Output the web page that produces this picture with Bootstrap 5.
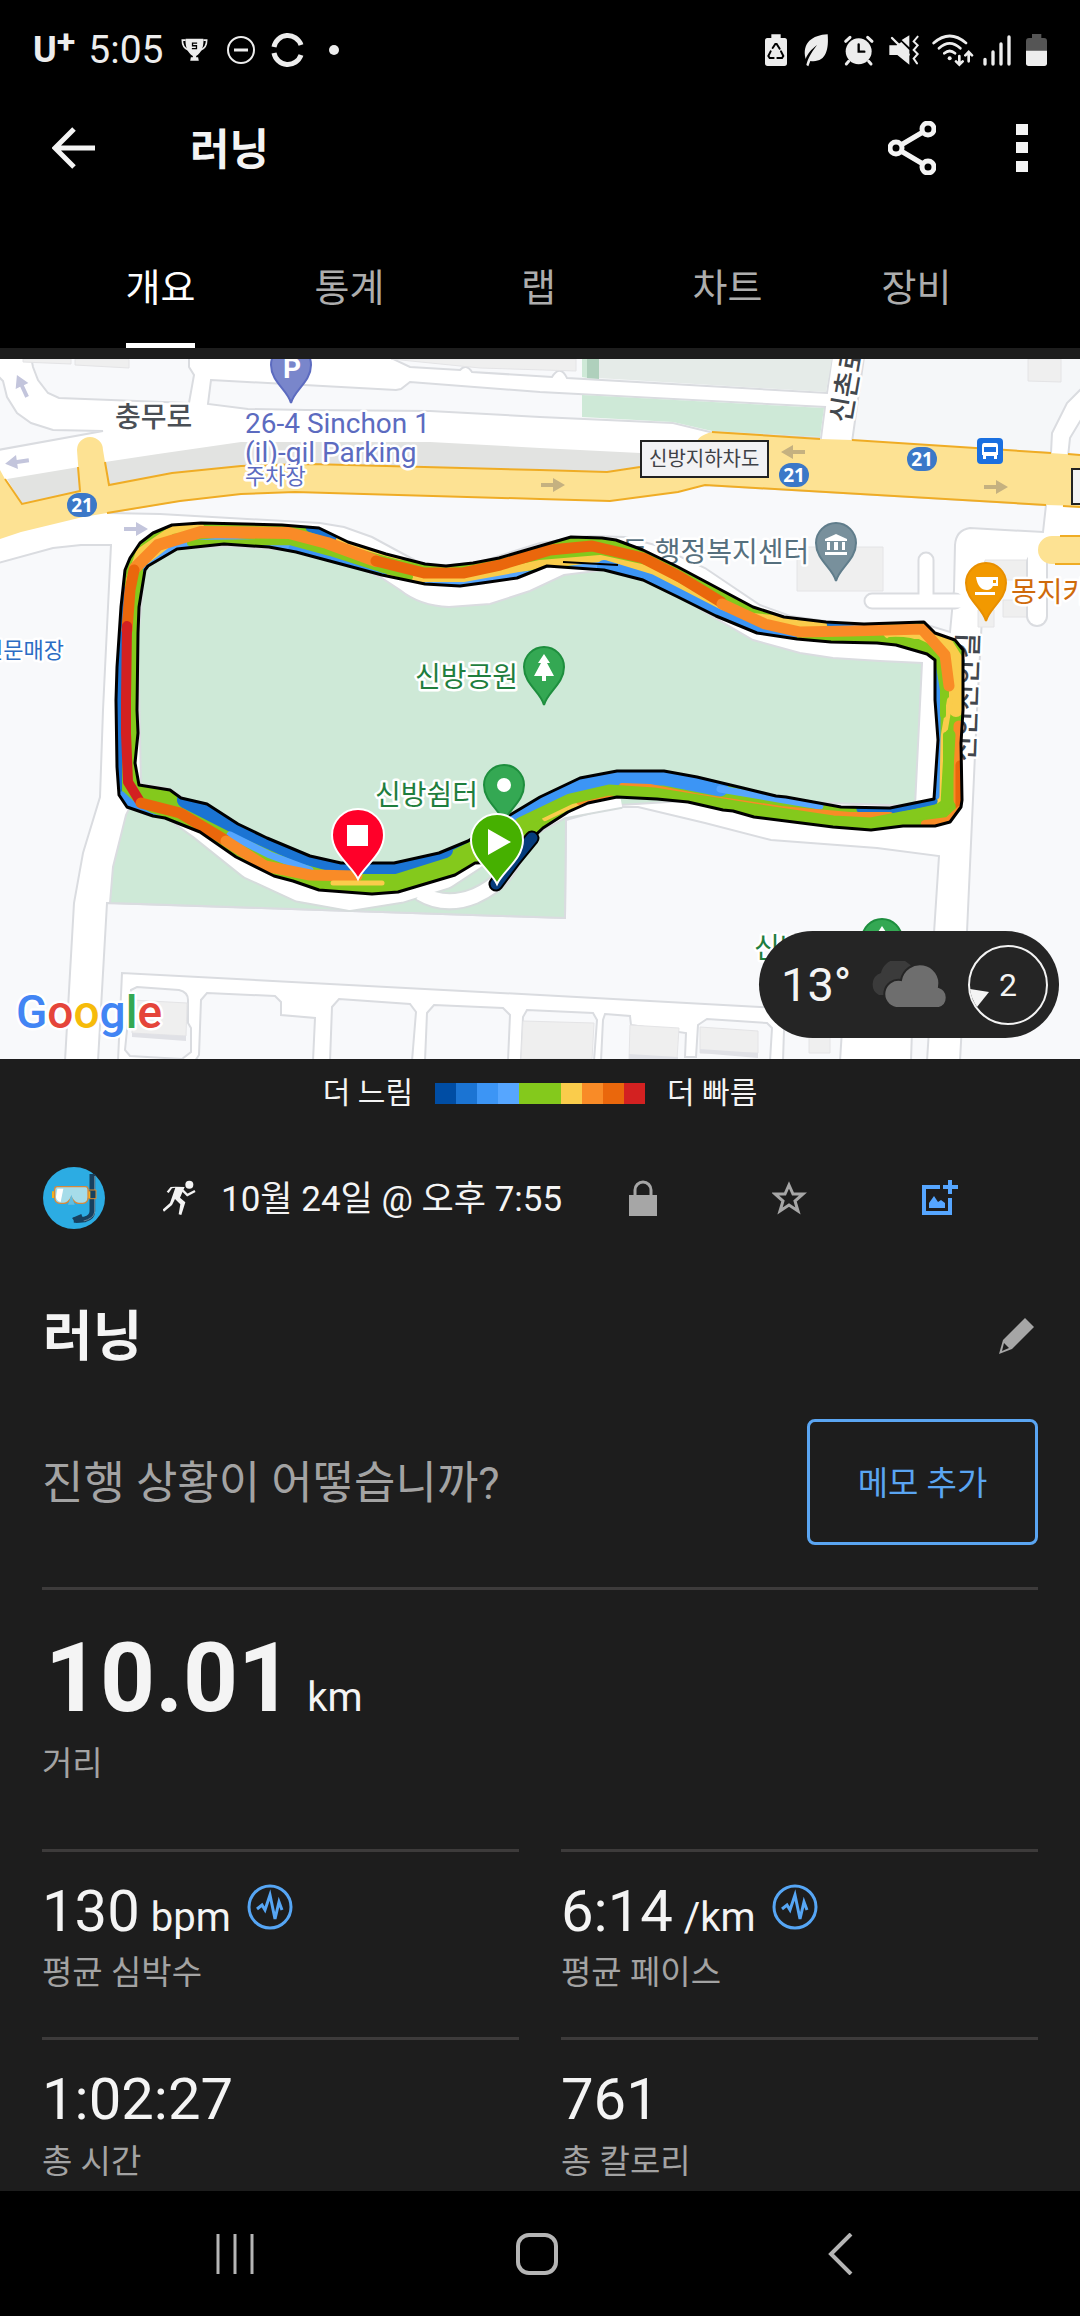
<!DOCTYPE html>
<html lang="ko">
<head>
<meta charset="utf-8">
<meta name="viewport" content="width=device-width, initial-scale=1">
<title>러닝</title>
<link rel="stylesheet" href="https://cdn.jsdelivr.net/npm/bootstrap@5.3.0/dist/css/bootstrap.min.css">
<style>
  body { background:#1d1d1d; color:#f4f4f4; font-family:Roboto,"Noto Sans CJK KR",sans-serif; font-size:33px; line-height:44px; min-height:100vh; }
  svg { display:block; flex:none; }
  .plain-btn { background:none; border:0; padding:0; color:inherit; }
  .status-bar { height:100px; padding:0 33px; color:#ededed; }
  .status-bar .clock { font-size:39px; margin-left:13px; }
  .carrier { font-size:36px; font-weight:700; }
  .carrier sup { font-size:34px; top:-9px; line-height:1; }
  .app-bar { height:96px; padding:0 44px 0 52px; }
  .app-bar h1 { font-size:43px; font-weight:700; line-height:60px; margin-left:95px; padding-top:4px; }
  .app-bar .more { margin-left:72px; }
  .tab-bar { height:152px; padding:0 69px 0 66px; }
  .tab-bar a { color:#adadad; font-size:38px; line-height:60px; text-decoration:none; height:92px; padding-top:2px; border-bottom:5px solid transparent; }
  .tab-bar a.active { color:#fff; border-color:#fff; }
  .map-box { margin-top:11px; }
  .map-box > svg { width:100%; height:700px; }
  .weather { right:21px; bottom:21px; width:300px; height:107px; background:#252525; padding:0 10px 0 22px; font-size:47px; }
  .legend-row { height:68px; font-size:30px; gap:22px; }
  .pace-scale { width:210px; height:21px; }
  .meta-row { height:142px; padding:0 122px 0 43px; }
  .meta-row time { font-size:35px; margin-left:24px; padding-top:4px; width:340px; white-space:nowrap; }
  .meta-actions { margin-left:68px; }
  .title-row { height:134px; padding:0 46px 0 43px; }
  .title-row h2 { font-size:54px; font-weight:700; line-height:70px; padding-top:4px; }
  .note-row { padding:16px 0 42px; }
  .note-row p { font-size:45px; line-height:60px; color:#a3a3a3; padding-top:4px; }
  .btn-note { width:231px; height:126px; border:3px solid #5aa5f2; border-radius:8px; color:#5aa5f2; font-size:33px; padding-top:10px; }
  .btn-note:hover { color:#fff; background:#5aa5f2; }
  .page-pad { padding:0 42px; }
  .rule { border-top:3px solid #3d3b3b; }
  .distance { padding:38px 0 63px; }
  .distance .figure { font-size:96px; line-height:100px; font-weight:700; padding-left:3px; }
  .unit { font-size:40px; line-height:40px; }
  .distance .unit { margin-left:14px; }
  .caption { color:#a3a3a3; font-size:33px; line-height:44px; }
  .distance .caption { margin-top:14px; }
  .stats-grid { --bs-gutter-x:42px; --bs-gutter-y:42px; margin-top:-42px; }
  .stat { padding:29px 0 0; }
  .stat .figure { font-size:58px; line-height:60px; }
  .stat .unit { margin-left:11px; }
  .stat .caption { margin-top:10px; }
  .nav-keys { height:126px; padding:0 227px 0 214px; margin-top:7px; }
  .map-box text { font-family:Roboto,"Noto Sans CJK KR",sans-serif; paint-order:stroke; stroke:#fff; stroke-width:5px; stroke-linejoin:round; font-size:28px; }
  .map-box .shield, .map-box .boxed { stroke:none; }
  .map-box .shield { font:700 19px "Noto Sans",sans-serif; fill:#fff; }
  .map-box .logo-word { font-size:46px; font-weight:500; }
</style>
</head>
<body class="d-flex flex-column">
<header class="bg-black">
  <div class="status-bar d-flex align-items-center justify-content-between">
    <div class="d-flex align-items-center">
      <span class="carrier">U<sup>+</sup></span><span class="clock">5:05</span>
      <svg style="margin-left:18px" width="27" height="24" viewBox="536 84 82 72" fill="#ededed"><path d="M550 86h54c2 22-6 44-22 52v4h6l2 11h-26l2-11h6v-4c-16-8-24-30-22-52z"/><path d="M550 90h-10c0 14 6 26 18 30M604 90h10c0 14-6 26-18 30" fill="none" stroke="#ededed" stroke-width="5"/><path d="M585 99h-14v8h12v9h-14" fill="none" stroke="#000" stroke-width="4"/></svg>
      <svg style="margin-left:18px" width="30" height="30" viewBox="0 0 30 30" fill="none" stroke="#ededed"><circle cx="15" cy="15" r="13" stroke-width="2"/><path d="M8 15h14" stroke-width="3"/></svg>
      <svg style="margin-left:15px" width="33" height="34" viewBox="0 0 33 34" fill="none" stroke="#ededed" stroke-width="5"><path d="M3 14A14 14 0 0 1 30 12M3 20A14 14 0 0 0 30 22"/></svg>
      <svg style="margin-left:25px" width="10" height="10"><circle cx="5" cy="5" r="5" fill="#ededed"/></svg>
    </div>
    <svg width="282" height="34" viewBox="75 67 846 102" fill="#ededed" stroke-linecap="round">
      <path d="M94 71h28v11h12q7 0 7 8v68q0 8-8 8H83q-8 0-8-8V90q0-8 7-8h12z"/>
      <path d="M98 112l8-12h4l9 14M92 122l-7 14 4 6h12M123 122l7 14-4 6h-14" fill="none" stroke="#000" stroke-width="6"/>
      <path d="M263 71c4 48-6 86-52 80l-6 16-6-4c4-16 12-34 32-60-18 14-28 26-34 42-12-48 20-72 66-74z"/>
      <circle cx="356" cy="122" r="39"/><path d="M317 92l13-12M396 92l-13-12M326 152l-7 8M386 152l7 8" stroke="#ededed" stroke-width="9"/><path d="M356 101v22h17" fill="none" stroke="#000" stroke-width="7"/>
      <path d="M448 104h22l14-10 24 24v44l-36-29h-24zM485 88l23-14v36z"/><path d="M456 82l50 50" stroke="#ededed" stroke-width="7"/><path d="M533 78l-12 14 12 12-12 14 12 12-12 14 10 14" fill="none" stroke="#ededed" stroke-width="6"/>
      <g fill="none" stroke="#ededed" stroke-width="8"><path d="M581 97q48-42 97 0M597 113q32-30 64 0M613 128q16-14 32 0M658 136v24M648 152l10 10 10-10M686 152v-24M676 134l10-10 10 10" /></g><circle cx="629" cy="143" r="6"/>
      <path d="M735 146v14M759 124v36M783 100v60M807 79v81" stroke="#ededed" stroke-width="10"/>
      <path d="M876 70h28v12h8q9 0 9 9v30h-63V91q0-9 9-9h9z" fill="#555"/><path d="M858 120h63v38q0 8-8 8h-47q-8 0-8-8z"/>
    </svg>
  </div>
  <div class="app-bar d-flex align-items-center">
    <button class="plain-btn" aria-label="뒤로"><svg width="43" height="42" viewBox="0 0 43 42" fill="none" stroke="#f4f4f4" stroke-width="5"><path d="M43 21H4M22 2L3 21l19 19"/></svg></button>
    <h1 class="mb-0 me-auto">러닝</h1>
    <button class="plain-btn" aria-label="공유"><svg width="48" height="54" viewBox="0 0 48 54" fill="none" stroke="#f4f4f4" stroke-width="5"><circle cx="8" cy="27" r="6"/><circle cx="40" cy="8" r="6"/><circle cx="40" cy="46" r="6"/><path d="M13 24l22-13M13 30l22 13"/></svg></button>
    <button class="plain-btn more" aria-label="메뉴"><svg width="28" height="48" fill="#f4f4f4"><path d="M8 0h12v11H8zM8 18h12v11H8zM8 37h12v11H8z"/></svg></button>
  </div>
  <nav class="tab-bar d-flex align-items-end">
    <div class="col text-center"><a class="active d-inline-block" href="#">개요</a></div>
    <div class="col text-center"><a class="d-inline-block" href="#">통계</a></div>
    <div class="col text-center"><a class="d-inline-block" href="#">랩</a></div>
    <div class="col text-center"><a class="d-inline-block" href="#">차트</a></div>
    <div class="col text-center"><a class="d-inline-block" href="#">장비</a></div>
  </nav>
</header>

<main>
<section class="map-box position-relative">
<svg viewBox="0 359 1080 700" preserveAspectRatio="xMidYMid slice" role="img" aria-label="지도">
  <defs>
    <path id="pin" d="M0 38C-3 25-20 17-20 0A20 20 0 1 1 20 0C20 17 3 25 0 38Z"/>
    <path id="bigpin" d="M0 42C-6 29-26 17-26-2A26 26 0 1 1 26-2C26 17 6 29 0 42Z"/>
    <path id="arrow" d="M-12-2h12v-5l12 7-12 7v-5h-12z"/>
    <path id="band" clip-rule="evenodd" fill-rule="evenodd" d="M127 807L119 795 117 767 116 700 117 667 121 607 125 570 130 558 140 543 153 533 172 525 201 523 282 525 319 528 348 542 386 554 425 564 446 566 473 563 499 558 540 546 571 537 602 538 616 540 643 550 678 567 753 607 784 617 826 622 864 624 924 622 935 633 955 640 963 650 963 710 961 743 962 800 961 807 950 822 935 826 903 826 871 830 833 827 754 817 733 811 723 810 688 802 657 799 617 797 588 803 568 812 543 828 525 845 506 862 475 863 455 875 398 892 372 894 319 890 293 881 274 876 236 857 200 832 165 818 153 816ZM139 785L170 790 181 798 207 804 238 824 267 838 310 856 341 863 394 863 439 853 468 841 510 815 540 797 580 778 617 771 664 771 697 777 743 788 776 796 786 797 841 807 890 808 934 799 938 740 935 700 935 660 927 654 896 645 877 643 831 642 797 639 757 633 716 616 678 597 643 580 604 570 547 566 517 578 482 583 460 586 425 584 382 575 296 552 269 547 224 544 177 549 148 566 145 570 139 607 138 633 137 710 138 733 135 763Z"/>
    <clipPath id="inBand"><use href="#band"/></clipPath>
  </defs>
  <rect x="0" y="359" width="1080" height="700" fill="#fff"/>
  <g fill="#f8f9fb" stroke="#dadce0" stroke-width="2">
    <path d="M-2 376L3 381 7 397 17 413 31 423 53 430 103 431-2 450Z"/>
    <path d="M31 357L33 367 38 380 48 393 59 398 189 403 194 375 189 367V357Z"/>
    <path d="M211 380L396 390 401 389 410 382 540 392 825 407 821 438 710 432 673 423 540 417 430 411 306 410 248 409 208 404Z"/>
    <path d="M389 357L410 367 460 370Q466 363 472 372L552 377Q560 364 567 378L827 393 832 357Z"/>
    <path fill="#f5f7f9" d="M864 357H1082V388L1067 403 1052 433 1051 453 852 442Z"/>
    <path d="M1082 418L1070 438 1068 457H1082Z"/>
    <path d="M-2 563L53 548 81 545H111L103 710 100 797 83 853 74 903 65 1061H-2Z"/>
    <path d="M107 513L160 514 320 523 344 527 372 537 396 550 420 563 440 566 480 562 540 543 590 536 625 537 655 545 705 568 760 605 790 616 860 626 924 624 950 632 954 590 955 545Q956 530 970 528L1043 532 1046 505 705 485 540 490 241 490Z"/>
    <path d="M985 562H1082V1061H960L967 932 977 710Z"/>
    <path d="M107 903L565 918 566 818 614 807 638 807 705 823 771 840 877 848 939 856 934 933 931 1015 760 1007 540 995 122 973 118 1061H98L103 973Z"/>
    <path d="M137 987L179 990Q188 992 188 1000V1023L191 1028V1052L182 1059 130 1056 125 1050 131 990Z"/>
    <path d="M207 993L275 996 281 1002V1015L315 1018 313 1061H195L199 1055 201 1000Z"/>
    <path d="M339 999L410 1004 416 1012 412 1061H330L332 1007Z"/>
    <path d="M434 1005L503 1008 510 1015 508 1061H425L427 1013Z"/>
    <path d="M527 1010L593 1013 597 1020 594 1061H521L523 1017Z"/>
    <path d="M605 1014L630 1016 631 1025 686 1033 685 1057H696L698 1025 707 1019 767 1023 772 1028 770 1061H601L603 1020Z"/>
    <path d="M784 1030H842L840 1061H783ZM912 1030H929L927 1061H911Z"/>
  </g>
  <path fill="#e5ebe8" d="M598 359H832L826 392 598 378Z"/><path fill="#cee9d7" d="M582 395L824 408 820 437 712 431 673 422 582 417ZM582 359h6v19l-6-1z"/><path fill="#afd0bc" d="M587 359h12v20l-12-1z"/>
  <path fill="#efefef" stroke="#e4e4e6" d="M23 359H71V364L23 362ZM75 359H129V368L75 365ZM391 359H576V371L480 368ZM1028 359H1061V382L1028 381ZM797 547H883V591H797ZM985 560H1030V580H985ZM1003 600H1027V617H1003ZM978 610H994V627H978ZM132 1000L187 1003 186 1036 132 1033ZM523 1021L594 1023 592 1059H521ZM630 1025L679 1028 677 1059H629ZM700 1027L758 1031V1053H700ZM809 1035H830V1053H809Z"/>
  <path fill="#e0e1e6" d="M700 1049L758 1053V1058L700 1053ZM629 1054L678 1057V1059H629ZM132 1033L186 1036V1041L132 1037Z"/>
  <g fill="none" stroke-linecap="round"><path d="M872 601H955M926 560V600" stroke="#dadce0" stroke-width="17"/><path d="M1037 563V616" stroke="#dadce0" stroke-width="22"/><path d="M872 601H966M926 560V600" stroke="#fff" stroke-width="13"/><path d="M1037 545V616" stroke="#fff" stroke-width="18"/></g>
  <path fill="#cee9d7" stroke="#dadce0" stroke-width="2" d="M145 565L177 549 228 546 300 551 340 560 380 577 400 590Q420 606 449 607L490 604 530 591 564 575 604 570 650 580 753 640 800 653 833 658 880 661 922 663 915 806 800 802 700 800 620 805 566 820 565 918 110 903 113 867 126 815 141 785 138 640Z"/>
  <g fill="none" stroke-linejoin="round"><path d="M420 893Q445 908 475 896 510 880 516 850L535 825" stroke="#d6dcdc" stroke-width="18"/><path d="M128 795L165 801 200 826 250 866 300 889 350 898 400 890 445 876 500 840 560 806 620 795" stroke="#d6dcdc" stroke-width="28"/><path d="M128 795L165 801 200 826 250 866 300 889 350 898 400 890 445 876 500 840 560 806 620 795" stroke="#fff" stroke-width="24"/><path d="M420 893Q445 908 475 896 510 880 516 850L535 825" stroke="#fff" stroke-width="14"/></g>
  <path fill="#e2e3e1" d="M7 479L79 467 80 491 22 504ZM105 462L158 454 241 442H430L540 448 640 453V467L607 472 540 470 310 464 241 466 172 473 109 485Z"/>
  <path fill="#fde293" d="M0 470L5 479 22 504 80 491 77 450A13 13 0 0 1 103 450L105 462 109 485 172 473 241 466 310 464 540 470 607 472 640 467 700 450Q690 438 712 432L820 439 852 440 1080 455V506L1046 505 705 485 678 492 610 501 540 499 295 492 241 494 180 501 107 513 83 517 21 532 0 539ZM1080 536H1052A14 14 0 0 0 1052 564H1080Z"/>
  <path fill="none" stroke="#efac25" stroke-width="2" d="M5 479L22 504 80 491 78 467M105 462L109 485 172 473 241 466 310 464 540 470 607 472 640 467M712 432L820 439M852 440L1051 453M1068 454L1080 455M1080 507L1063 506M1046 505L705 485 678 492 610 501 540 499 295 492 241 494 180 501 107 513M1060 536H1080M1055 564H1080"/>
  <g fill="#c3c5dc"><use href="#arrow" transform="translate(22 386) rotate(-115)"/><use href="#arrow" transform="translate(17 462) rotate(172)"/><use href="#arrow" transform="translate(136 529)"/></g>
  <g fill="#c5b180"><use href="#arrow" transform="translate(553 485)"/><use href="#arrow" transform="translate(793 452) rotate(180)"/><use href="#arrow" transform="translate(996 487)"/></g>

  <text transform="translate(850 424) rotate(-80)" fill="#42474d" font-weight="500">신촌로</text>
  <text transform="translate(974 762) rotate(-88)" fill="#42474d" font-weight="500">신안천안길</text>
  <text x="622" y="562" fill="#56707e">동 행정복지센터</text>

  <use href="#band" fill="#84c91c"/>
  <g clip-path="url(#inBand)" fill="none" stroke-linecap="round" stroke-linejoin="round">
    <path stroke="#1b74d3" stroke-width="8" d="M122 590L119 640 118 795M310 528L345 540M780 617L870 626"/>
    <path stroke="#facc4b" stroke-width="8" d="M130 580L140 552 172 530 200 527M150 560L180 541M340 540L400 556M370 568L424 580 465 580 540 564 600 559 650 570 680 588 740 615"/>
    <path stroke="#facc4b" stroke-width="14" d="M740 619L820 626M890 632L920 632 946 644 956 660V710"/>
    <path stroke="#facc4b" stroke-width="6" d="M950 700L943 740 940 808M545 818L570 806 605 795"/>
    <path stroke="#56a6ff" stroke-width="10" d="M148 570L178 547 225 542 290 548M425 587L465 587 520 577 600 567"/>
    <path stroke="#3c95f5" stroke-width="14" d="M295 550L380 573M604 567L650 581 716 615 757 631 790 637"/>
    <path stroke="#3c95f5" stroke-width="7" d="M937 660V740L936 796M120 800L150 816 180 826M122 795L140 812"/>
    <path stroke="#84c91c" stroke-width="6" d="M190 543L290 542 330 553 380 569 410 577M800 638L880 637M890 640Q925 638 938 660L943 690V715M946 735V805"/>
    <path stroke="#f98b27" stroke-width="12" d="M135 568L158 545 201 532 289 533 327 543 376 561"/>
    <path stroke="#ea670c" stroke-width="11" d="M134 570L130 590 127 630M376 561L424 573 463 573 500 565 550 550 592 546 643 558 680 577 721 602"/>
    <path stroke="#f98b27" stroke-width="11" d="M722 604L765 624 800 632 850 631 922 629 945 655 949 686M959 726V800"/>
    <path stroke="#ea670c" stroke-width="9" d="M960 765V806"/>
    <path stroke="#f98b27" stroke-width="8" d="M960 810L948 821 925 824M580 801L610 797"/>
    <path stroke="#1b74d3" stroke-width="16" d="M185 800L238 827 300 855 341 866 394 866 445 850"/>
    <path stroke="#1b74d3" stroke-width="7" d="M445 850L505 820M860 809L890 811 934 801"/>
    <path stroke="#3c95f5" stroke-width="17" d="M515 818L575 786 617 777 664 777 720 788"/>
    <path stroke="#56a6ff" stroke-width="7" d="M230 835L270 855 310 870M720 789L790 801 820 806"/>
    <path stroke="#f98b27" stroke-width="6" d="M622 786L650 787 695 796 781 809 850 815 890 815"/>
    <path stroke="#84c91c" stroke-width="11" d="M950 735L946 804 936 811 902 817 871 823 833 821 747 808 654 793 609 790 570 799 520 823"/>
    <path stroke="#d32121" stroke-width="10" d="M127 626L126 700 126 733 128 782 139 800"/>
    <path stroke="#ea670c" stroke-width="11" d="M141 803L180 813 225 840"/>
    <path stroke="#f98b27" stroke-width="11" d="M226 841L265 866 310 875 357 876"/>
    <path stroke="#facc4b" stroke-width="5" d="M333 883H382"/>
  </g>
  <use href="#band" fill="none" stroke="#000" stroke-width="3" stroke-linejoin="round"/>
  <path d="M563 562L618 565" stroke="#000" stroke-width="2"/>
  <path d="M532 838L514 860 496 884" fill="none" stroke="#000" stroke-width="15" stroke-linecap="round"/><path d="M532 838L514 860 496 884" fill="none" stroke="#053c7c" stroke-width="11" stroke-linecap="round"/>

  <g stroke-width="2">
    <use href="#pin" x="291" y="365" fill="#7986cb" stroke="#5c6bc0"/><use href="#pin" x="544" y="667" fill="#34a853" stroke="#1e8e3e"/><use href="#pin" x="504" y="785" fill="#34a853" stroke="#1e8e3e"/><use href="#pin" x="836" y="543" fill="#78909c" stroke="#607d8b"/><use href="#pin" x="986" y="583" fill="#f29900" stroke="#e88f00"/><use href="#pin" x="882" y="939" fill="#34a853" stroke="#1e8e3e"/>
  </g>
  <g fill="#fff"><path d="M544 654l6 9h-3l7 13h-8v5h-4v-5h-8l7-13h-3zM882 926l6 9h-3l7 13h-20l7-13h-3z"/><circle cx="504" cy="785" r="7"/><path d="M836 534l11 5v2h-22v-2zM827 542h3v8h-3zM834 542h4v8h-4zM842 542h3v8h-3zM825 552h22v3h-22zM976 577h22v9h-5q-2 4-6 4-9 0-11-13zM975 592h20v3h-20z"/><path d="M993 580h3v3h-3z" fill="#f29900"/></g>
  <text x="283" y="378" fill="#fff" class="boxed" font-weight="700">P</text>
  <text x="115" y="427" fill="#4a4f55" font-weight="500">충무로</text>
  <g fill="#5c6bc0"><text x="245" y="433">26-4 Sinchon 1</text><text x="245" y="462">(il)-gil Parking</text><text x="245" y="484" style="font-size:22px">주차장</text></g>
  <rect x="641" y="441" width="127" height="36" fill="#f2f2f4" stroke="#222" stroke-width="2"/><text class="boxed" x="649" y="466" fill="#3f4146" style="font-size:20px">신방지하차도</text>
  <rect x="1072" y="469" width="30" height="35" fill="#f2f2f4" stroke="#222" stroke-width="2"/>
  <g fill="#3b78c8"><rect x="67" y="493" width="30" height="24" rx="12"/><rect x="779" y="463" width="30" height="24" rx="12"/><rect x="907" y="447" width="30" height="24" rx="12"/></g>
  <g text-anchor="middle"><text class="shield" x="82" y="512">21</text><text class="shield" x="794" y="482">21</text><text class="shield" x="922" y="466">21</text></g>
  <rect x="977" y="438" width="26" height="26" rx="4" fill="#1a6fe0"/><path fill="#fff" fill-rule="evenodd" d="M984 443h12q2 0 2 3v9h-1v4h-3v-3h-8v3h-3v-4h-1v-9q0-3 2-3zm0 4v5h12v-5z"/>
  <text x="64" y="658" text-anchor="end" fill="#2b6cc4" style="font-size:22px">전문매장</text>
  <text x="415" y="687" fill="#1f7e3e">신방공원</text><text x="375" y="805" fill="#1f7e3e">신방쉼터</text><text x="754" y="958" fill="#1f7e3e">신방</text>
  <text x="1011" y="602" fill="#cf6a0b">몽지카페</text>
  <g stroke="#fff" stroke-width="2"><use href="#bigpin" x="358" y="837" fill="#ff0029"/><use href="#bigpin" x="497" y="842" fill="#46b000"/></g>
  <path fill="#fff" d="M347 825h21v21h-21zM488 829v26l23-13z"/>
  <text class="logo-word" x="16" y="1028"><tspan fill="#4285f4">G</tspan><tspan fill="#e5453a">o</tspan><tspan fill="#f6bb0a">o</tspan><tspan fill="#4285f4">g</tspan><tspan fill="#34a853">l</tspan><tspan fill="#e5453a">e</tspan></text>
</svg>
<div class="weather position-absolute rounded-pill d-flex align-items-center justify-content-between">
  <span>13°</span>
  <svg width="84" height="48" viewBox="0 0 84 48"><path fill="#3b3b3b" d="M12 34A12 12 0 0 1 14 12 17 17 0 0 1 46 8L30 34Z"/><path fill="#6e6e6e" stroke="#252525" stroke-width="2" d="M29 47A14 14 0 0 1 34 19 19 19 0 0 1 72 26 11 11 0 0 1 72 47Z"/></svg>
  <svg width="82" height="82" viewBox="0 0 82 82"><circle cx="41" cy="41" r="39" fill="none" stroke="#f4f4f4" stroke-width="2"/><path fill="#f4f4f4" d="M3 45l19 3-12 15q-6-9-7-18z"/><text x="41" y="52" text-anchor="middle" fill="#f4f4f4" style="stroke:none;font-size:32px">2</text></svg>
</div>
</section>

<div class="legend-row d-flex align-items-center justify-content-center">
  <span>더 느림</span>
  <svg class="pace-scale" viewBox="0 0 10 1" preserveAspectRatio="none" shape-rendering="crispEdges"><path fill="#004da4" d="M0 0h1v1H0z"/><path fill="#1b74d3" d="M1 0h1v1H1z"/><path fill="#3c95f5" d="M2 0h1v1H2z"/><path fill="#56a6ff" d="M3 0h1v1H3z"/><path fill="#84c91c" d="M4 0h2v1H4z"/><path fill="#facc4b" d="M6 0h1v1H6z"/><path fill="#f98b27" d="M7 0h1v1H7z"/><path fill="#ea670c" d="M8 0h1v1H8z"/><path fill="#d32121" d="M9 0h1v1H9z"/></svg>
  <span>더 빠름</span>
</div>

<div class="meta-row d-flex align-items-center">
  <svg width="62" height="62" viewBox="39 51 186 186"><circle cx="132" cy="144" r="93" fill="#2cace3"/><path d="M187 72v112q0 18-22 24l-34 2" fill="none" stroke="#17405f" stroke-width="17"/><path d="M194 78v108q-2 20-36 28" fill="none" stroke="#6b8798" stroke-width="3"/><path d="M126 204l28-12 8 24-24 3z" fill="#17405f"/><path d="M176 120h22v26h-22z" fill="#17405f" stroke="#e08c2d" stroke-width="3"/><path d="M66 124h8v20h-8zM172 124h9v20h-9z" fill="#f5b01f"/><path d="M82 110h84q8 0 8 8v24q0 18-16 18h-12q-12 0-22-18-10 18-22 18h-12q-16 0-16-18v-24q0-8 8-8z" fill="#a6dce9" stroke="#d8893b" stroke-width="4"/><path d="M82 116h18l-8 40q-14-4-14-16z" fill="#fff"/><path d="M124 134l10 30h-20z" fill="#62bde0"/></svg>
  <svg style="margin-left:58px" width="34" height="36" viewBox="399 89 102 108" fill="#f4f4f4"><circle cx="478" cy="103" r="12"/><path d="M436 109l28 1-14 32 16 14-12 38-8-2 5-30-16-16-9 18-24 20-4-6 22-20 16-46-10 2-10 14-6-4 12-14z"/><path d="M458 120l14 14 23-12" fill="none" stroke="#f4f4f4" stroke-width="7"/></svg>
  <time>10월 24일 @ 오후 7:55</time>
  <div class="meta-actions d-flex flex-fill justify-content-between align-items-center">
    <button class="plain-btn" aria-label="비공개"><svg width="28" height="36" viewBox="0 0 28 36"><path d="M0 15h28v21H0z" fill="#a6a6a6"/><path d="M6 16V10a8 8 0 0 1 16 0V16" fill="none" stroke="#a6a6a6" stroke-width="3"/></svg></button>
    <button class="plain-btn" aria-label="즐겨찾기"><svg width="35" height="34" viewBox="0 0 35 34" fill="none" stroke="#a6a6a6" stroke-width="3"><path d="M17 4l4 9h10l-8 7 3 10-9-6-9 6 3-10-8-7h10z"/></svg></button>
    <button class="plain-btn" aria-label="사진 추가"><svg width="36" height="36" viewBox="0 0 36 36" fill="none" stroke="#56a6ff" stroke-width="4"><path d="M18 7H2v26h26V18M28 0v14M21 7h15"/><path d="M7 28v-5l5-7 4 6 3-2 4 3v5z" fill="#56a6ff" stroke="none"/></svg></button>
  </div>
</div>

<div class="title-row d-flex align-items-center justify-content-between">
  <h2 class="mb-0">러닝</h2>
  <button class="plain-btn" aria-label="이름 편집"><svg width="36" height="36" viewBox="0 0 36 36"><path d="M27 0l9 9-22 22-13 5L5 22z" fill="#a6a6a6"/><path d="M6 25l5 5-7 3z" fill="#1d1d1d"/></svg></button>
</div>

<div class="page-pad">
  <div class="note-row d-flex align-items-center justify-content-between">
    <p class="mb-0">진행 상황이 어떻습니까?</p>
    <button class="btn btn-note">메모 추가</button>
  </div>
  <section class="rule distance">
    <div class="d-flex align-items-baseline"><span class="figure">10.01</span><span class="unit">km</span></div>
    <div class="caption">거리</div>
  </section>
  <section class="row stats-grid">
    <div class="col-6"><div class="rule stat">
      <div class="figure d-flex align-items-baseline">130<span class="unit">bpm</span><svg class="align-self-start ms-3" width="46" height="50" viewBox="0 -3 46 50" fill="none" stroke="#56a6f5" stroke-width="3"><circle cx="23" cy="23" r="21"/><path d="M10 25l5-4 3 5 5-15 5 24 4-17 3 8"/></svg></div>
      <div class="caption">평균 심박수</div></div></div>
    <div class="col-6"><div class="rule stat">
      <div class="figure d-flex align-items-baseline">6:14<span class="unit">/km</span><svg class="align-self-start ms-3" width="46" height="50" viewBox="0 -3 46 50" fill="none" stroke="#56a6f5" stroke-width="3"><circle cx="23" cy="23" r="21"/><path d="M10 25l5-4 3 5 5-15 5 24 4-17 3 8"/></svg></div>
      <div class="caption">평균 페이스</div></div></div>
    <div class="col-6"><div class="rule stat"><div class="figure">1:02:27</div><div class="caption">총 시간</div></div></div>
    <div class="col-6"><div class="rule stat"><div class="figure">761</div><div class="caption">총 칼로리</div></div></div>
  </section>
</div>
</main>

<footer class="nav-keys bg-black d-flex align-items-center justify-content-between">
  <button class="plain-btn" aria-label="최근 앱"><svg width="42" height="42" stroke="#b5b5b5" stroke-width="3"><path d="M4 1v40M21 1v40M38 1v40"/></svg></button>
  <button class="plain-btn" aria-label="홈"><svg width="42" height="42" fill="none" stroke="#b5b5b5" stroke-width="4"><rect x="2" y="2" width="38" height="38" rx="11"/></svg></button>
  <button class="plain-btn" aria-label="뒤로 가기"><svg width="35" height="42" fill="none" stroke="#b5b5b5" stroke-width="4"><path d="M33 1L13 21l20 20"/></svg></button>
</footer>
<script src="https://cdn.jsdelivr.net/npm/bootstrap@5.3.0/dist/js/bootstrap.bundle.min.js"></script>
</body>
</html>
